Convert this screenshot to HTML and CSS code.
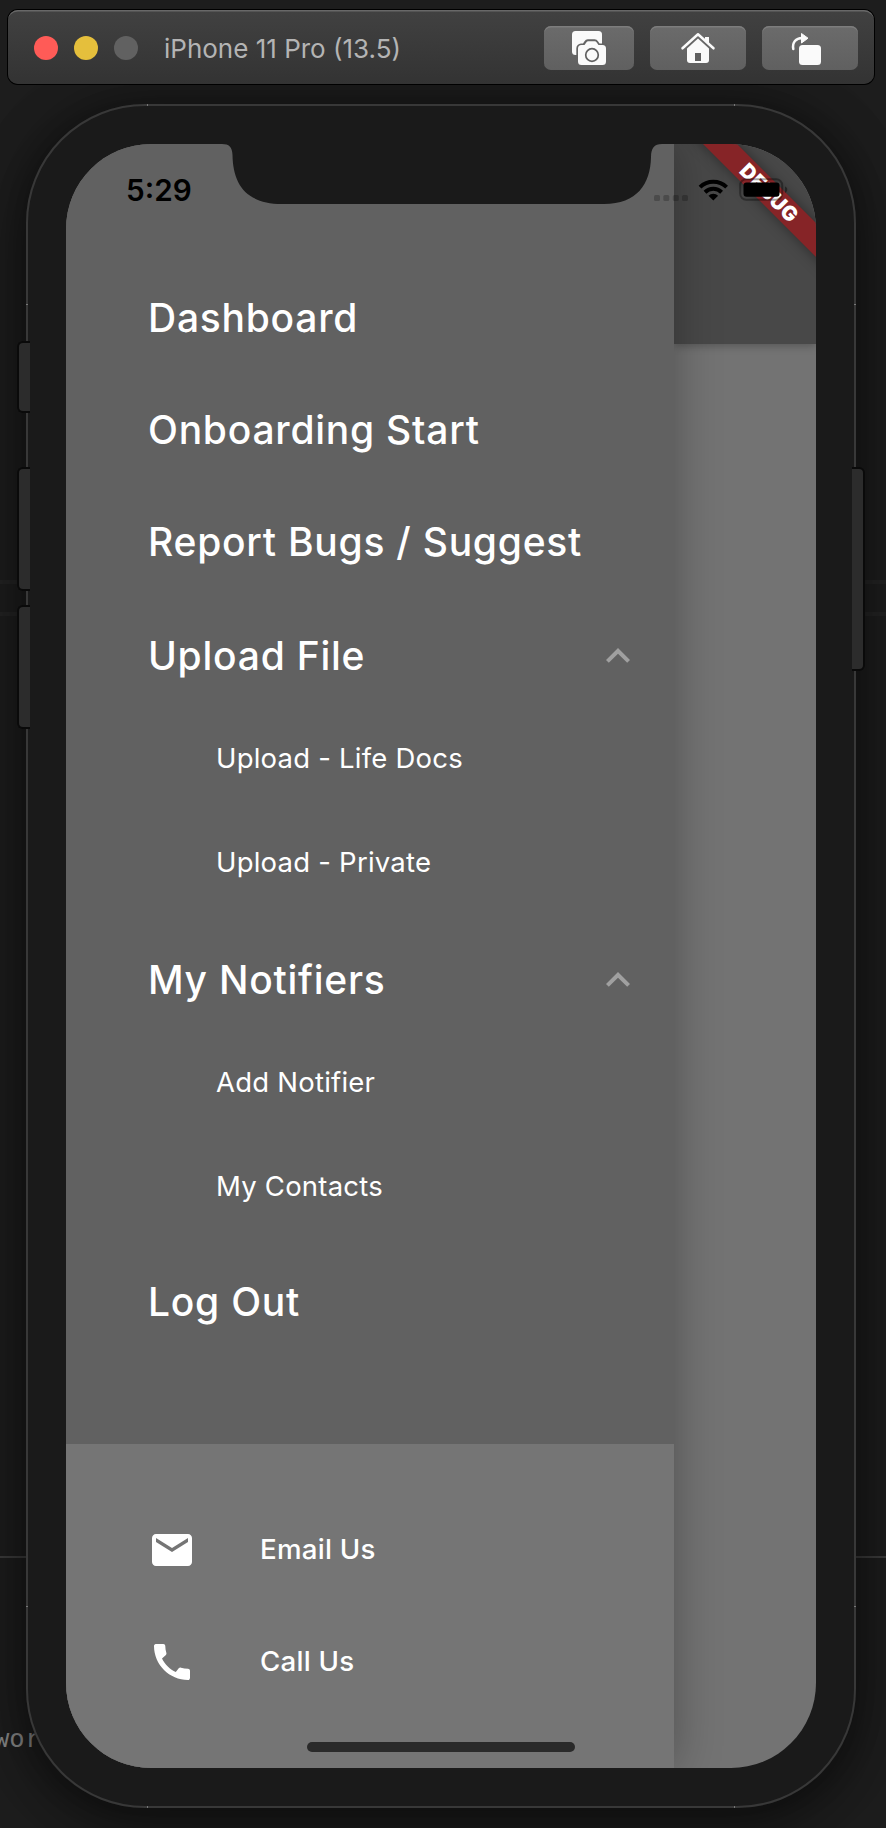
FILE: index.html
```html
<!DOCTYPE html>
<html lang="en">
<head>
<meta charset="utf-8">
<title>iPhone 11 Pro (13.5)</title>
<link rel="stylesheet" href="styles.css">
</head>
<body>
<div class="desktop">
  <div class="rule rule-a"></div>
  <div class="rule rule-b"></div>
  <div class="rule rule-c"></div>
  <span class="editor-text">wor</span>

  <header class="toolbar">
    <i class="light red"></i><i class="light yellow"></i><i class="light gray"></i>
    <h1 class="title">iPhone 11 Pro (13.5)</h1>
    <button class="tool shot" aria-label="Screenshot">
      <svg width="36" height="36" viewBox="0 0 36 36"><rect x="1" y="1" width="30" height="24" rx="3.5" fill="#fafafa"/><path d="M5.300 27V18.500A5 5 0 0 1 10 13.500h2l1.500-2.300A4 4 0 0 1 17.500 9.200h6a4 4 0 0 1 3.500 2L28.500 13.500h7.500v14z" fill="#646464"/><path d="M7 18.500a3.500 3.500 0 0 1 3.500-3.500h3l1.800-2.500a2.500 2.500 0 0 1 2-1.200h6.400a2.500 2.500 0 0 1 2 1.200l1.800 2.500h4a3.500 3.500 0 0 1 3.500 3.500V31.500a3.500 3.500 0 0 1-3.500 3.500h-21A3.500 3.500 0 0 1 7 31.500z" fill="#fafafa"/><circle cx="21" cy="25" r="6.300" fill="none" stroke="#606060" stroke-width="1.700"/></svg>
    </button>
    <button class="tool" aria-label="Home">
      <svg width="36" height="34" viewBox="0 0 36 34"><path d="M25 6h4v8l-4-3.600z" fill="#fafafa"/><path d="M2.500 17.300 18 3.300l15.500 14" fill="none" stroke="#fafafa" stroke-width="2.500" stroke-linecap="round" stroke-linejoin="round"/><path d="M18 7.500 29 17.500V29a3 3 0 0 1-3 3H10a3 3 0 0 1-3-3V17.500z" fill="#fafafa"/><path d="M15 22h6v8h-6z" fill="#606060"/></svg>
    </button>
    <button class="tool" aria-label="Rotate">
      <svg class="rotate" width="36" height="36" viewBox="0 0 36 36"><rect x="9" y="15" width="22" height="20" rx="3.500" fill="#fafafa"/><path d="M3.300 19C2 12.500 6 8 12 8" fill="none" stroke="#fafafa" stroke-width="2.500" stroke-linecap="round"/><path d="M11.500 3.500v9.500l6.500-4.800z" fill="#fafafa" stroke="#fafafa" stroke-linejoin="round"/></svg>
    </button>
  </header>

  <main class="phone">
    <i class="key key-mute"></i><i class="key key-up"></i><i class="key key-down"></i><i class="key key-power"></i>
    <svg class="edge" width="830" height="1704" viewBox="0 0 830 1704">
      <rect x="1" y="1" width="828" height="1702" rx="118" fill="none" stroke="#383838" stroke-width="2"/>
      <path d="M121.500 0v2M708.500 0v2M121.500 1702v2M708.500 1702v2M0 200.500h2M828 200.500h2M0 1502.500h2M828 1502.500h2" stroke="#777"/>
    </svg>
    <div class="screen">
      <aside class="drawer">
        <nav class="menu">
          <a class="item"><span>Dashboard</span></a>
          <a class="item"><span>Onboarding Start</span></a>
          <a class="item"><span>Report Bugs / Suggest</span></a>
          <a class="item group first"><span>Upload File</span><svg width="48" height="48" viewBox="0 0 24 24"><path fill="#a0a0a0" d="M12 8l-6 6 1.410 1.410L12 10.830l4.590 4.580L18 14z"/></svg></a>
          <a class="sub">Upload - Life Docs</a>
          <a class="sub">Upload - Private</a>
          <a class="item group"><span>My Notifiers</span><svg width="48" height="48" viewBox="0 0 24 24"><path fill="#a0a0a0" d="M12 8l-6 6 1.410 1.410L12 10.830l4.590 4.580L18 14z"/></svg></a>
          <a class="sub">Add Notifier</a>
          <a class="sub">My Contacts</a>
          <a class="item last"><span>Log Out</span></a>
        </nav>
        <div class="contact">
          <a class="contact-row"><svg width="48" height="48" viewBox="0 0 24 24"><path fill="#fff" d="M20 4H4c-1.100 0-1.990.9-1.990 2L2 18c0 1.100.9 2 2 2h16c1.100 0 2-.9 2-2V6c0-1.100-.9-2-2-2zm0 4l-8 5-8-5V6l8 5 8-5v2z"/></svg><span>Email Us</span></a>
          <a class="contact-row"><svg width="48" height="48" viewBox="0 0 24 24"><path fill="#fff" d="M20.010 15.380c-1.230 0-2.420-.2-3.530-.56-.35-.12-.74-.03-1.010.24l-1.570 1.970c-2.830-1.350-5.480-3.900-6.890-6.830l1.950-1.660c.27-.28.35-.67.24-1.020-.37-1.110-.56-2.300-.56-3.530 0-.54-.45-.99-.99-.99H4.190C3.650 3 3 3.240 3 3.990 3 13.280 10.730 21 20.010 21c.71 0 .99-.63.99-1.180v-3.450c0-.54-.45-.99-.99-.99z"/></svg><span>Call Us</span></a>
        </div>
      </aside>
      <section class="backdrop"><div class="appbar"></div></section>
      <div class="ribbon">DEBUG</div>
      <svg class="notch" width="440" height="60" viewBox="0 0 440 60"><path d="M0 0C7 0 10.300 3 10.500 11C11 40 24 60 60 60H382C415 60 428.500 40 429 13C429.200 4 432 0 440 0z" fill="#1a1a1a"/></svg>
      <span class="clock">5:29</span>
      <svg class="status" width="136" height="24" viewBox="0 0 136 24">
        <g fill="#000" fill-opacity=".22"><rect x="0" y="17" width="6" height="6" rx="1.500"/><rect x="9.300" y="17" width="6" height="6" rx="1.500"/><rect x="18.800" y="17" width="6" height="6" rx="1.500"/><rect x="28" y="17" width="6" height="6" rx="1.500"/></g>
        <g transform="translate(.8 0)"><g fill="none" stroke="#000" stroke-width="4"><path d="M45.200 9.100a19.200 19.200 0 0 1 26.600 0"/><path d="M50.200 14.200a12 12 0 0 1 16.600 0"/></g>
        <path d="M58.500 22.500l-4.800-4.800a7 7 0 0 1 9.600 0z"/></g>
        <rect x="86.200" y="1.200" width="42" height="20.600" rx="6" fill="none" stroke="#000" stroke-opacity=".35" stroke-width="2"/>
        <rect x="89.500" y="4.600" width="36" height="14.200" rx="3"/>
        <path d="M131 8.500c3 1 3 5 0 6.500z" fill-opacity=".4"/>
      </svg>
      <i class="home-bar"></i>
    </div>
  </main>
</div>
</body>
</html>
```

FILE: styles.css
```css
* { box-sizing: border-box; }
body { margin: 0; background: #1c1c1c; font-family: Inter, "Liberation Sans", sans-serif; }
.desktop { position: relative; width: 886px; height: 1828px; overflow: hidden; padding: 10px 12px 0 8px; background: #1d1d1d; }

/* editor window behind the simulator */
.rule { position: absolute; left: 0; width: 886px; }
.rule-a { top: 580px; height: 4px; background: #232323; }
.rule-b { top: 612px; height: 4px; background: #232323; }
.rule-c { top: 1556px; height: 2px; background: #3c3c3c; }
.editor-text { position: absolute; left: -6px; top: 1723px; font: 25.500px/30px "DejaVu Sans Mono", monospace; color: #858585; }

.toolbar { position: relative; z-index: 2; display: flex; align-items: center; height: 74px; padding: 0 16px 0 26px; border-radius: 10px; background: linear-gradient(#414141, #333); box-shadow: inset 0 2px 0 -.5px #686868, 0 0 0 1px #000; }
.light { width: 24px; height: 24px; margin: 2px 16px 0 0; border-radius: 50%; }
.red { background: #ff5b57; }
.yellow { background: #e5bf3c; }
.gray { background: #616161; }
.title { flex: 1; margin: 0; padding: 3px 0 0 10px; font-size: 26px; font-weight: 400; line-height: 32px; color: #b4b4b4; white-space: nowrap; }
.tool { display: flex; align-items: center; justify-content: center; width: 96px; height: 44px; margin: 2px 0 0 16px; padding: 0; border: 0; border-radius: 7px; background: linear-gradient(#6b6b6b, #606060); box-shadow: inset 0 1.500px 0 #7d7d7d; }
.shot { width: 90px; }
.rotate { margin-right: 4px; }

.phone { position: relative; width: 830px; height: 1704px; margin: 20px 0 0 18px; padding: 40px; border-radius: 118px; background: #1a1a1a; box-shadow: 0 0 50px rgba(0,0,0,.4), 0 18px 60px rgba(0,0,0,.4); }
.edge { position: absolute; left: 0; top: 0; }
.key { position: absolute; left: -9px; width: 13px; background: #2c2c2c; border: 2px solid #0a0a0a; border-right: 0; border-radius: 6px 0 0 6px; z-index: 1; }
.key-mute { top: 237px; height: 72px; }
.key-up { top: 363px; height: 124px; }
.key-down { top: 501px; height: 124px; }
.key-power { left: auto; right: -9px; top: 363px; height: 204px; border: 2px solid #0a0a0a; border-left: 0; border-radius: 0 6px 6px 0; }

.screen { position: relative; display: flex; width: 750px; height: 1624px; border-radius: 85px; overflow: hidden; background: #737373; }
.drawer { position: relative; z-index: 1; display: flex; flex-direction: column; width: 608px; background: #616161; box-shadow: 0 0 44px rgba(0,0,0,.3); }
.menu { display: flex; flex-direction: column; height: 1300px; padding: 118px 32px 0 82px; color: #fff; }
.item { display: flex; align-items: center; flex: none; height: 112px; font-size: 39px; font-weight: 500; letter-spacing: .75px; white-space: nowrap; }
.item span { padding-bottom: 2px; }
.group { justify-content: space-between; height: 100px; margin-top: 16px; }
.first { margin-top: 8px; }
.last { margin-top: 8px; }
.sub { display: flex; align-items: center; flex: none; height: 104px; padding-left: 68px; font-size: 27.500px; letter-spacing: .22px; }
.contact { flex: 1; padding: 50px 82px 0; background: #757575; }
.contact-row { display: flex; align-items: center; gap: 64px; height: 112px; color: #fff; font-size: 27.700px; font-weight: 500; letter-spacing: .25px; }
.contact-row span { padding-bottom: 2px; }
.backdrop { flex: 1; }
.appbar { height: 200px; background: #484848; box-shadow: 0 2px 8px rgba(0,0,0,.25); }

/* overlays on the screen */
.ribbon { position: absolute; z-index: 1; left: 582px; top: 36px; width: 240px; height: 24px; padding-left: 3px; transform: rotate(45deg); background: #862427; box-shadow: 0 0 14px rgba(0,0,0,.4); color: #fff; font-size: 20.400px; line-height: 24px; font-weight: 900; letter-spacing: .5px; text-align: center; }
.notch { position: absolute; z-index: 2; left: 156px; top: 0; }
.clock { position: absolute; z-index: 2; left: 60px; top: 28px; font-size: 29.700px; line-height: 36px; font-weight: 600; color: #000; }
.status { position: absolute; z-index: 3; left: 588px; top: 34px; }
.home-bar { position: absolute; z-index: 2; left: 241px; top: 1598px; width: 268px; height: 10px; border-radius: 5px; background: #2a2a2a; }
```
